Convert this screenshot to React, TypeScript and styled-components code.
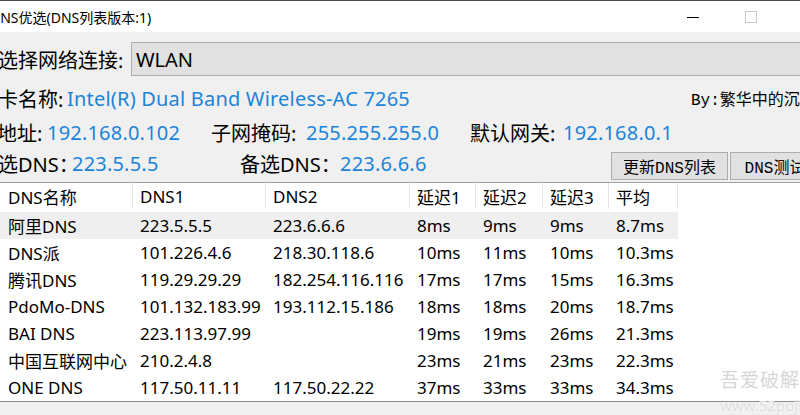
import {createGlobalStyle, styled} from 'styled-components';

const $ui = `"Noto Sans", "Noto Sans CJK SC", sans-serif`;
const $mono = `"Liberation Mono", "Noto Sans CJK SC", monospace`;
const $blue = '#1b84d8';

const GlobalStyle = createGlobalStyle`
  html, body {
    margin: 0;
    padding: 0;
    overflow: hidden;
    background: #f0f0f0;
    font-family: ${$ui};
  }
`;

const Screen = styled.div`
  position: relative;
  width: 800px;
  height: 415px;
  overflow: hidden;
`;

const Window = styled.div`
  margin-left: -22px;
  width: 860px;
  height: 415px;
  display: flex;
  flex-direction: column;
  background: #f0f0f0;
  color: #000;
`;

const TitleBar = styled.header`
  height: 31px;
  border-top: 1px solid #4a4a4a;
  background: #fff;
  display: flex;
  align-items: center;
  padding-left: 12px;
  font-size: 14px;
`;

const TitleText = styled.span`
  flex: 1;
`;

const WinButton = styled.span`
  width: 58px;
  height: 31px;
  display: flex;
  align-items: center;
  justify-content: center;
`;

const Form = styled.section`
  display: flex;
  flex-direction: column;
  font-size: 20px;
  padding-top: 10px;
`;

const Row = styled.div<{$h: number; $mt?: number}>`
  display: flex;
  align-items: center;
  height: ${p => p.$h}px;
  margin-top: ${p => p.$mt ?? 0}px;
  white-space: nowrap;
`;

const Field = styled.div<{$w?: number}>`
  display: flex;
  align-items: center;
  width: ${p => (p.$w ? `${p.$w}px` : 'auto')};
  flex-shrink: 0;
`;

const Label = styled.span<{$w: number}>`
  width: ${p => p.$w}px;
  flex-shrink: 0;
`;

const Value = styled.span`
  color: ${$blue};
  letter-spacing: 0.2px;
`;

const Combo = styled.div`
  flex: 1;
  height: 32px;
  margin-left: 4px;
  background: #e1e1e1;
  border-top: 1px solid #adadad;
  border-bottom: 1px solid #adadad;
  border-left: 1px solid #adadad;
  display: flex;
  align-items: center;
  padding-left: 4px;
`;

const Author = styled.span`
  font-family: ${$mono};
  font-size: 16px;
`;

const Button = styled.button<{$w: number}>`
  width: ${p => p.$w}px;
  height: 28px;
  margin: 6px 2px 0 0;
  background: #e1e1e1;
  border: 1px solid #adadad;
  font-family: ${$mono};
  font-weight: normal;
  font-size: 16px;
  color: #000;
  padding: 0;
  flex-shrink: 0;
`;

const Table = styled.div`
  flex: 1;
  margin-left: 22px;
  margin-top: 3px;
  border-top: 1px solid #a0a0a0;
  border-bottom: 1px solid #8c8c8c;
  background: #fff;
  font-size: 17px;
`;

const cols = '133px 133px 144px 66px 67px 66px 69px';

const HeadRow = styled.div`
  display: grid;
  grid-template-columns: ${cols};
  height: 29px;
`;

const HeadCell = styled.div`
  display: flex;
  align-items: center;
  padding-left: 7px;
  border-right: 1px solid #e5e5e5;
  margin-bottom: 3px;
  &:first-child {
    padding-left: 8px;
  }
`;

const BodyRow = styled.div<{$active?: boolean}>`
  display: grid;
  grid-template-columns: ${cols};
  width: 678px;
  height: 27px;
  background: ${p => (p.$active ? '#efefef' : 'transparent')};
`;

const Cell = styled.div`
  display: flex;
  align-items: center;
  padding-left: 7px;
  white-space: nowrap;
  &:first-child {
    padding-left: 8px;
  }
`;

const Footer = styled.div`
  height: 15px;
  background: #f0f0f0;
`;

const Watermark = styled.div`
  position: absolute;
  left: 720px;
  top: 371px;
  white-space: nowrap;
  color: #d6d6d6;
  text-shadow: 0 0 1px #fff, 0 0 2px #fff;
  font-family: ${$ui};
  line-height: 1;
  div:first-child {
    font-size: 19px;
    letter-spacing: 1px;
  }
  div:last-child {
    font-size: 15px;
    margin-top: 8px;
    color: #dcdcdc;
  }
`;

const headers = ['DNS名称', 'DNS1', 'DNS2', '延迟1', '延迟2', '延迟3', '平均'];

const rows = [
  ['阿里DNS', '223.5.5.5', '223.6.6.6', '8ms', '9ms', '9ms', '8.7ms'],
  ['DNS派', '101.226.4.6', '218.30.118.6', '10ms', '11ms', '10ms', '10.3ms'],
  ['腾讯DNS', '119.29.29.29', '182.254.116.116', '17ms', '17ms', '15ms', '16.3ms'],
  ['PdoMo-DNS', '101.132.183.99', '193.112.15.186', '18ms', '18ms', '20ms', '18.7ms'],
  ['BAI DNS', '223.113.97.99', '', '19ms', '19ms', '26ms', '21.3ms'],
  ['中国互联网中心', '210.2.4.8', '', '23ms', '21ms', '23ms', '22.3ms'],
  ['ONE DNS', '117.50.11.11', '117.50.22.22', '37ms', '33ms', '33ms', '34.3ms'],
];

function MinIcon() {
  return (
    <svg width='12' height='12' viewBox='0 0 12 12'>
      <line x1='0' y1='6.5' x2='12' y2='6.5' stroke='#000' strokeWidth='1' />
    </svg>
  );
}

function MaxIcon() {
  return (
    <svg width='12' height='12' viewBox='0 0 12 12'>
      <rect x='0.5' y='0.5' width='11' height='11' fill='none' stroke='#c8c8c8' strokeWidth='1' />
    </svg>
  );
}

export default function App() {
  return (
    <Screen>
      <GlobalStyle />
      <Window>
        <TitleBar>
          <TitleText>DNS优选(DNS列表版本:1)</TitleText>
          <WinButton><MinIcon /></WinButton>
          <WinButton><MaxIcon /></WinButton>
          <WinButton />
        </TitleBar>
        <Form>
          <Row $h={34}>
            <Label $w={149}>请选择网络连接:</Label>
            <Combo>WLAN</Combo>
          </Row>
          <Row $h={30} $mt={7}>
            <Field $w={713}>
              <Label $w={89}>网卡名称:</Label>
              <Value>Intel(R) Dual Band Wireless-AC 7265</Value>
            </Field>
            <Author>By:繁华中的沉默</Author>
          </Row>
          <Row $h={30} $mt={4}>
            <Field $w={233}>
              <Label $w={69}>IP地址:</Label>
              <Value>192.168.0.102</Value>
            </Field>
            <Field $w={259}>
              <Label $w={95}>子网掩码:</Label>
              <Value>255.255.255.0</Value>
            </Field>
            <Field>
              <Label $w={93}>默认网关:</Label>
              <Value>192.168.0.1</Value>
            </Field>
          </Row>
          <Row $h={32} $mt={0}>
            <Field $w={262}>
              <Label $w={94}>首选DNS：</Label>
              <Value>223.5.5.5</Value>
            </Field>
            <Field $w={371}>
              <Label $w={100}>备选DNS：</Label>
              <Value>223.6.6.6</Value>
            </Field>
            <Button $w={117}>更新DNS列表</Button>
            <Button $w={90}>DNS测试</Button>
          </Row>
        </Form>
        <Table>
          <HeadRow>
            {headers.map(h => (
              <HeadCell key={h}>{h}</HeadCell>
            ))}
          </HeadRow>
          {rows.map((r, i) => (
            <BodyRow key={r[0]} $active={i === 0}>
              {r.map((c, j) => (
                <Cell key={j}>{c}</Cell>
              ))}
            </BodyRow>
          ))}
        </Table>
        <Footer />
      </Window>
      <Watermark>
        <div>吾爱破解论坛</div>
        <div>www.52pojie.cn</div>
      </Watermark>
    </Screen>
  );
}
